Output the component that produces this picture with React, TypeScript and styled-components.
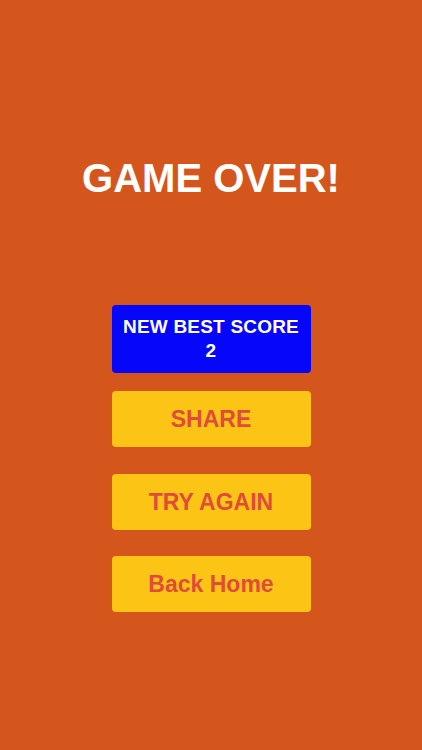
import React from 'react';
import styled, { createGlobalStyle } from 'styled-components';

const GlobalStyle = createGlobalStyle`
  html, body {
    margin: 0;
    padding: 0;
    background: #d4561d;
  }
  * {
    box-sizing: border-box;
  }
`;

const Screen = styled.div`
  width: 422px;
  height: 750px;
  background: #d4561d;
  font-family: 'Liberation Sans', Arial, sans-serif;
  display: flex;
  flex-direction: column;
  align-items: center;
`;

const Title = styled.h1`
  margin: 155px 0 0;
  font-size: 40px;
  line-height: 46px;
  font-weight: 700;
  color: #ffffff;
`;

const Menu = styled.div`
  margin-top: 104px;
  width: 199px;
  display: flex;
  flex-direction: column;
`;

const ScoreCard = styled.div`
  height: 68px;
  border-radius: 4px;
  background: #0606f8;
  color: #ffffff;
  display: flex;
  flex-direction: column;
  align-items: center;
  justify-content: center;
  font-size: 19px;
  font-weight: 700;
  line-height: 24px;
  letter-spacing: 0.2px;
  margin-bottom: 18px;
`;

const MenuButton = styled.button<{ $gap?: number }>`
  height: 56px;
  width: 100%;
  border: none;
  border-radius: 4px;
  background: #fcc515;
  color: #e04b3a;
  font-family: inherit;
  font-size: 23px;
  font-weight: 700;
  cursor: pointer;
  margin-bottom: ${(p) => p.$gap ?? 0}px;
  padding: 0;
`;

const App: React.FC = () => {
  return (
    <>
      <GlobalStyle />
      <Screen>
        <Title>GAME OVER!</Title>
        <Menu>
          <ScoreCard>
            <span>NEW BEST SCORE</span>
            <span>2</span>
          </ScoreCard>
          <MenuButton $gap={27}>SHARE</MenuButton>
          <MenuButton $gap={26}>TRY AGAIN</MenuButton>
          <MenuButton>Back Home</MenuButton>
        </Menu>
      </Screen>
    </>
  );
};

export default App;
